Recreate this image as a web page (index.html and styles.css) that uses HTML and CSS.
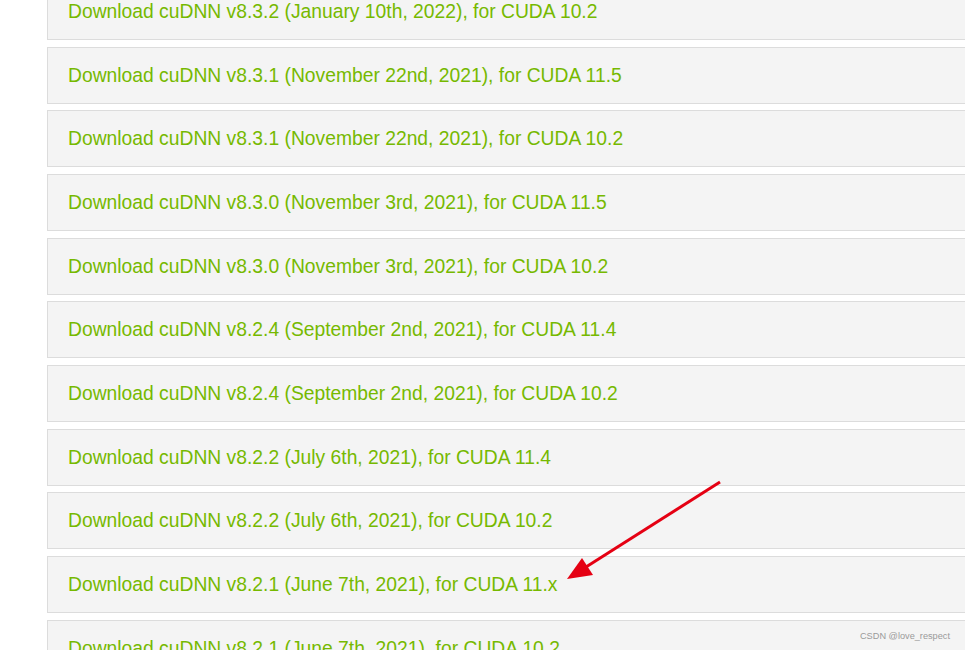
FILE: index.html
```html
<!DOCTYPE html>
<html lang="en">
<head>
  <meta charset="UTF-8">
  <title>cuDNN Archive</title>
  <link rel="stylesheet" href="styles.css">
</head>
<body>

  <div class="page">
    <!-- archive list -->
    <div class="list">
      <a class="item" href="#">Download cuDNN v8.3.2 (January 10th, 2022), for CUDA 10.2</a>
      <a class="item" href="#">Download cuDNN v8.3.1 (November 22nd, 2021), for CUDA 11.5</a>
      <a class="item" href="#">Download cuDNN v8.3.1 (November 22nd, 2021), for CUDA 10.2</a>
      <a class="item" href="#">Download cuDNN v8.3.0 (November 3rd, 2021), for CUDA 11.5</a>
      <a class="item" href="#">Download cuDNN v8.3.0 (November 3rd, 2021), for CUDA 10.2</a>
      <a class="item" href="#">Download cuDNN v8.2.4 (September 2nd, 2021), for CUDA 11.4</a>
      <a class="item" href="#">Download cuDNN v8.2.4 (September 2nd, 2021), for CUDA 10.2</a>
      <a class="item" href="#">Download cuDNN v8.2.2 (July 6th, 2021), for CUDA 11.4</a>
      <a class="item" href="#">Download cuDNN v8.2.2 (July 6th, 2021), for CUDA 10.2</a>
      <a class="item" href="#">Download cuDNN v8.2.1 (June 7th, 2021), for CUDA 11.x</a>
      <a class="item" href="#">Download cuDNN v8.2.1 (June 7th, 2021), for CUDA 10.2</a>
    </div>

    <!-- red annotation arrow -->
    <svg class="arrow" width="965" height="650" viewBox="0 0 965 650">
      <line x1="720" y1="482" x2="586" y2="567" stroke="#e50013" stroke-width="3"/>
      <polygon points="567,579 582,558 593,575" fill="#e50013"/>
    </svg>

    <div class="mark">CSDN @love_respect</div>
  </div>

</body>
</html>
```

FILE: styles.css
```css
html, body {
  margin: 0;
  padding: 0;
  background: #ffffff;
}

.page {
  position: relative;
  width: 965px;
  height: 650px;
  overflow: hidden;
}

.list {
  display: flex;
  flex-direction: column;
  gap: 6.67px;
  margin-top: -17px;
  padding-left: 47px;
}

.item {
  display: block;
  box-sizing: border-box;
  width: 960px;
  height: 57px;
  line-height: 55px;
  padding-left: 20px;
  background: #f4f4f4;
  border: 1px solid #dcdcdc;
  color: #76b900;
  font-family: "Liberation Sans", Arial, sans-serif;
  font-size: 19.3px;
  text-decoration: none;
  white-space: nowrap;
}

.arrow {
  position: absolute;
  left: 0;
  top: 0;
  pointer-events: none;
}

.mark {
  position: absolute;
  right: 15px;
  bottom: 9px;
  color: #9a9a9a;
  font-family: "Liberation Sans", Arial, sans-serif;
  font-size: 9.2px;
}
```
